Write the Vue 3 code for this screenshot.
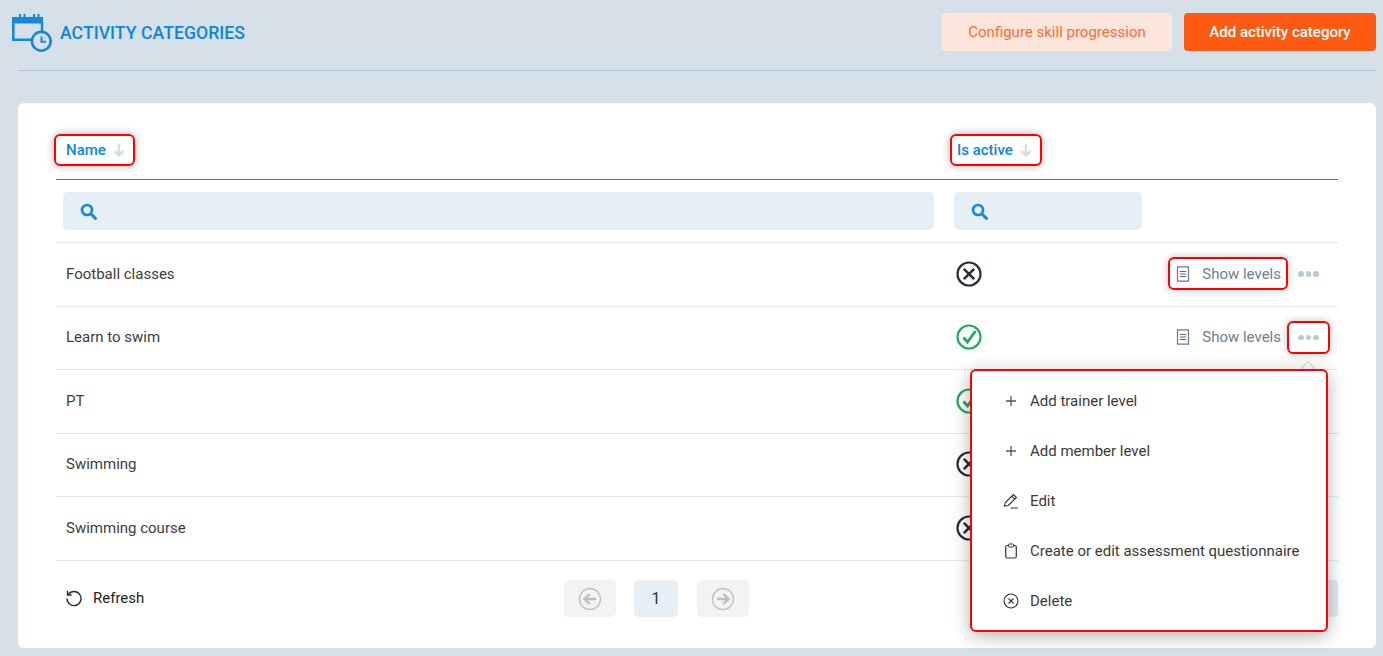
<script setup>
const rows = [
  { name: 'Football classes', active: false },
  { name: 'Learn to swim', active: true },
  { name: 'PT', active: true },
  { name: 'Swimming', active: false },
  { name: 'Swimming course', active: false },
]
</script>

<template>
  <div class="page">
    <header class="top">
      <div class="title">
        <svg class="logo" width="42" height="40" viewBox="0 0 42 40" fill="none">
          <path d="M1.300 5.500V27.800H20" stroke="#1488dd" stroke-width="2.600"/>
          <path d="M0 5h31v6.500H0z" fill="#1488dd"/>
          <path d="M8 2v4M12.500 2v4M22 2v4M26.500 2v4" stroke="#1488dd" stroke-width="2"/>
          <path d="M30 10v9" stroke="#1488dd" stroke-width="2.400"/>
          <circle cx="29.300" cy="29.300" r="9.400" fill="#d6e0e9" stroke="#1488dd" stroke-width="2.600"/>
          <path d="M29.500 24.500v5.300h4.500" stroke="#1488dd" stroke-width="1.900"/>
        </svg>
        <h1>ACTIVITY CATEGORIES</h1>
      </div>
      <div class="top-actions">
        <button class="btn soft">Configure skill progression</button>
        <button class="btn solid">Add activity category</button>
      </div>
    </header>

    <main class="card">
      <div class="grid head">
        <div><span class="sort"><b>Name</b><svg width="12" height="14" viewBox="0 0 12 14" fill="none"><path d="M6 1v11M1.500 8 6 12.500 10.500 8" stroke="#d5dde5" stroke-width="2.500"/></svg></span></div>
        <div><span class="sort alt"><b>Is active</b><svg width="12" height="14" viewBox="0 0 12 14" fill="none"><path d="M6 1v11M1.500 8 6 12.500 10.500 8" stroke="#d5dde5" stroke-width="2.500"/></svg></span></div>
        <div></div>
      </div>

      <div class="grid filters">
        <div class="search"><svg width="17" height="17" viewBox="0 0 17 17" fill="none"><circle cx="7" cy="7" r="5" stroke="#1488dd" stroke-width="2.600"/><path d="m10.800 10.800 4.700 4.700" stroke="#1488dd" stroke-width="3" stroke-linecap="round"/></svg></div>
        <div class="search"><svg width="17" height="17" viewBox="0 0 17 17" fill="none"><circle cx="7" cy="7" r="5" stroke="#1488dd" stroke-width="2.600"/><path d="m10.800 10.800 4.700 4.700" stroke="#1488dd" stroke-width="3" stroke-linecap="round"/></svg></div>
        <div></div>
      </div>

      <div v-for="(r, i) in rows" :key="r.name" class="grid row">
        <div class="name">{{ r.name }}</div>
        <div class="status">
          <svg v-if="r.active" width="26" height="26" viewBox="0 0 26 26" fill="none"><circle cx="13" cy="13" r="11.500" stroke="#22ab5a" stroke-width="2.200"/><path d="m7.500 13.500 4 4.500 8-11" stroke="#22ab5a" stroke-width="2.800"/></svg>
          <svg v-else width="26" height="26" viewBox="0 0 26 26" fill="none"><circle cx="13" cy="13" r="11.500" stroke="#2b3038" stroke-width="2.200"/><path d="m7.800 7.800 10.400 10.400m0-10.400L7.800 18.200" stroke="#2b3038" stroke-width="2.600"/></svg>
        </div>
        <div v-if="i < 2" class="acts">
          <span class="levels" :class="{ marked: i === 0 }">
            <svg width="14" height="16" viewBox="0 0 14 16" fill="none"><path d="M1.500.8h11v14.400h-11z" stroke="#5f7a9a" stroke-width="1.200"/><path d="M3.800 5.500h6.400M3.800 8h6.400M3.800 10.500h6.400" stroke="#5f6b78" stroke-width="1.200"/></svg>
            Show levels
          </span>
          <span class="dots" :class="{ marked: i === 1 }"><i></i><i></i><i></i></span>
        </div>
      </div>

      <div class="foot">
        <span class="refresh">
          <svg width="18" height="18" viewBox="0 0 18 18" fill="none"><path d="M3.300 5.500A7 7 0 1 1 2 9.500" stroke="#2b3038" stroke-width="1.400"/><path d="M2.500 1.800v4.200h4.200" stroke="#2b3038" stroke-width="1.400"/></svg>
          Refresh
        </span>
        <div class="pager">
          <span class="pg off"><svg width="24" height="24" viewBox="0 0 24 24" fill="none"><circle cx="12" cy="12" r="10.500" stroke="#c4c4c4" stroke-width="1.500"/><path d="M18 12H7M11.500 7 6.500 12l5 5" stroke="#bdbdbd" stroke-width="2.400"/></svg></span>
          <span class="pg cur">1</span>
          <span class="pg off next"><svg width="24" height="24" viewBox="0 0 24 24" fill="none"><circle cx="12" cy="12" r="10.500" stroke="#c4c4c4" stroke-width="1.500"/><path d="M6 12h11M12.500 7l5 5-5 5" stroke="#bdbdbd" stroke-width="2.400"/></svg></span>
        </div>
        <span class="size"></span>
      </div>

      <div class="menu">
        <span class="caret"></span>
        <div class="item"><svg width="16" height="16" viewBox="0 0 16 16" fill="none"><path d="M8 3v10M3 8h10" stroke="#555" stroke-width="1.300"/></svg>Add trainer level</div>
        <div class="item"><svg width="16" height="16" viewBox="0 0 16 16" fill="none"><path d="M8 3v10M3 8h10" stroke="#555" stroke-width="1.300"/></svg>Add member level</div>
        <div class="item"><svg width="16" height="16" viewBox="0 0 16 16" fill="none"><path d="M1.500 13 2.300 9.500 10.500 1.500l3 3-8.200 8zM8.800 3.200l3 3M7.500 15h7.500" stroke="#333" stroke-width="1.100"/></svg>Edit</div>
        <div class="item"><svg width="16" height="16" viewBox="0 0 16 16" fill="none"><rect x="2.700" y="2.500" width="10.600" height="12.500" rx="1.500" stroke="#333" stroke-width="1.200"/><rect x="5.500" y="1" width="5" height="3" rx=".8" fill="#fff" stroke="#333" stroke-width="1"/></svg>Create or edit assessment questionnaire</div>
        <div class="item"><svg width="16" height="16" viewBox="0 0 16 16" fill="none"><circle cx="8" cy="8" r="7" stroke="#333" stroke-width="1.100"/><path d="m5.500 5.500 5 5m0-5-5 5" stroke="#333" stroke-width="1.100"/></svg>Delete</div>
      </div>
    </main>
  </div>
</template>

<style scoped>
.page {
  height: 656px;
  overflow: hidden;
  background: #d6e0e9;
  font-family: Roboto, "Liberation Sans", sans-serif;
  font-size: 15px;
  color: #3c3c3c;
}
.top {
  display: flex;
  align-items: flex-start;
  justify-content: space-between;
  height: 70px;
  margin: 0 7px 32px 18px;
  border-bottom: 1px solid #b5c8da;
}
.title {
  display: flex;
  align-items: center;
  margin-left: -6px;
  padding-top: 12px;
}
.logo { margin-right: 6px; }
h1 {
  margin: 2px 0 0;
  font-size: 17.700px;
  line-height: 24px;
  font-weight: 500;
  color: #0d87db;
}
.top-actions {
  display: flex;
  gap: 12px;
  padding-top: 13px;
}
.btn {
  height: 38px;
  border: 0;
  border-radius: 4px;
  font: 500 15px Roboto, sans-serif;
}
.soft { width: 230px; background: #fee5dc; color: #ff6a3a; font-weight: 400; }
.solid { width: 192px; background: #ff5a14; color: #fff; }

.card {
  position: relative;
  z-index: 0;
  height: 545px;
  margin: 0 7px 0 18px;
  background: #fff;
  border-radius: 6px;
  padding: 0 38px;
  box-sizing: border-box;
}
.grid {
  display: grid;
  grid-template-columns: 898px 188px 1fr;
}
.head {
  height: 77px;
  align-items: start;
  padding-top: 31px;
  box-sizing: border-box;
  border-bottom: 1px solid #1185d6;
}
.sort {
  display: inline-flex;
  align-items: center;
  gap: 7px;
  height: 32px;
  padding: 0 8px 0 10px;
  margin-left: -2px;
  border: 2px solid #f00;
  border-radius: 6px;
  box-shadow: 0 0 8px rgba(0,0,0,.3);
  box-sizing: border-box;
  color: #0d87db;
  font-size: 15px;
}
.sort.alt { margin-left: -4px; padding: 0 8px 0 5px; }
.sort b { font-weight: 500; }
.filters {
  height: 63px;
  padding: 12px 0 0 7px;
  box-sizing: border-box;
  grid-template-columns: 871px 188px 1fr;
  column-gap: 20px;
  border-bottom: 1px solid #dbe5ee;
}
.search {
  height: 38px;
  border-radius: 5px;
  background: #e6eef6;
  display: flex;
  align-items: center;
  padding-left: 17px;
}
.row {
  height: 63.500px;
  padding-bottom: 1px;
  align-items: center;
  border-bottom: 1px solid #e2eaf1;
  box-sizing: border-box;
}
.name { padding-left: 10px; }
.status { display: flex; padding-left: 2px; }
.acts {
  display: flex;
  align-items: center;
  justify-content: flex-end;
  color: #6c7f93;
}
.levels {
  display: inline-flex;
  align-items: center;
  gap: 12px;
  height: 33px;
  margin-right: -1px;
  padding: 0 5px 0 6px;
  border: 2px solid transparent;
  border-radius: 6px;
  box-sizing: border-box;
}
.dots {
  display: inline-flex;
  align-items: center;
  justify-content: center;
  gap: 2px;
  width: 43px;
  height: 33px;
  margin-right: 8px;
  border: 2px solid transparent;
  border-radius: 6px;
  box-sizing: border-box;
}
.dots i {
  width: 5.500px;
  height: 5.500px;
  border-radius: 50%;
  background: #bccad8;
}
.marked {
  border-color: #f00;
  box-shadow: 0 0 8px rgba(0,0,0,.25);
}
.foot {
  display: grid;
  grid-template-columns: 508px 185px 1fr;
  align-items: center;
  height: 76px;
}
.refresh {
  display: inline-flex;
  align-items: center;
  gap: 10px;
  padding: 0 0 1px 9px;
  color: #222;
}
.pager {
  display: flex;
  gap: 18px;
}
.pg {
  display: flex;
  align-items: center;
  justify-content: center;
  height: 37px;
  border-radius: 5px;
  font-size: 16px;
}
.pg.off { width: 52px; background: #f3f3f3; }
.pg.next { margin-left: 1px; }
.pg.cur { width: 44px; background: #e6eef6; color: #333; }
.size {
  justify-self: end;
  width: 60px;
  height: 37px;
  border-radius: 4px;
  background: #e3e9ef;
}
.menu {
  position: absolute;
  left: 952px;
  top: 266px;
  width: 358px;
  height: 263px;
  padding: 5px 0;
  background: #fff;
  border: 2px solid #f00;
  border-radius: 6px;
  box-sizing: border-box;
  box-shadow: 0 4px 18px rgba(0,0,0,.3);
}
.caret {
  position: absolute;
  z-index: -1;
  right: 13px;
  top: -8px;
  width: 10px;
  height: 10px;
  background: #fff;
  border: 1px solid #ccd5de;
  box-sizing: border-box;
  transform: rotate(45deg);
}
.item {
  display: flex;
  align-items: center;
  gap: 11px;
  height: 50px;
  padding-left: 31px;
  color: #3a3a3a;
}
</style>
